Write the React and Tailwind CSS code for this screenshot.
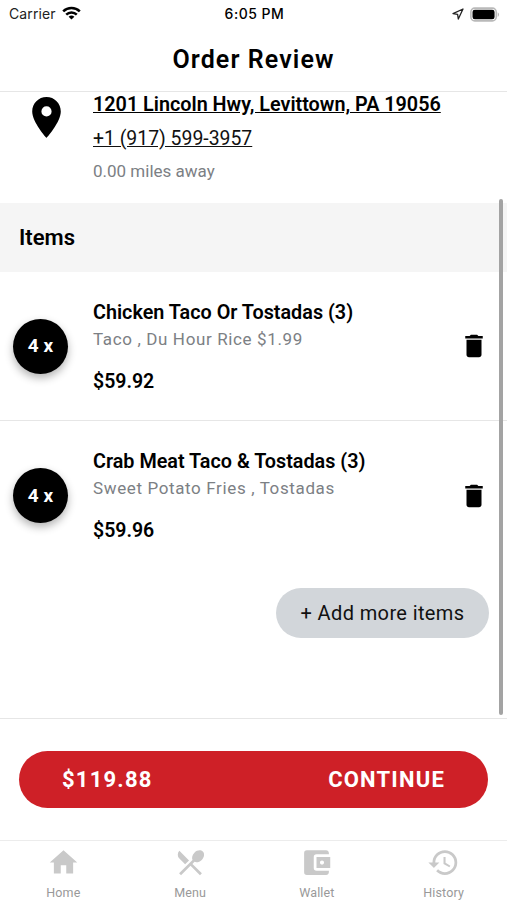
import React, { useState } from 'react';
import {
  MdPlace, MdDelete, MdHome, MdRestaurantMenu, MdAccountBalanceWallet, MdHistory
} from 'react-icons/md';

const initialItems = [
  {
    id: 1,
    qty: 4,
    name: 'Chicken Taco Or Tostadas (3)',
    extras: 'Taco , Du Hour Rice $1.99',
    price: 59.92,
  },
  {
    id: 2,
    qty: 4,
    name: 'Crab Meat Taco & Tostadas (3)',
    extras: 'Sweet Potato Fries , Tostadas',
    price: 59.96,
  },
];

const tabs = [
  { label: 'Home', icon: MdHome },
  { label: 'Menu', icon: MdRestaurantMenu },
  { label: 'Wallet', icon: MdAccountBalanceWallet },
  { label: 'History', icon: MdHistory },
];

const StatusBar = () => (
  <div className="h-7 shrink-0 grid grid-cols-3 items-center pl-[9px] pr-[7px] font-['Inter'] leading-7">
    <div className="flex items-center gap-1.5 text-[#222] text-[14px] tracking-[0.1px]">
      <span>Carrier</span>
      <svg className="w-[19px] h-[14px] -mt-0.5" viewBox="0 0 19 14" fill="none" stroke="#000" strokeWidth="2.5">
        <path d="M1.2 5.4a11.8 11.8 0 0 1 16.6 0" />
        <path d="M4.2 8.6a7.6 7.6 0 0 1 10.6 0" />
        <path d="M9.5 13.6 6.6 10.8a4.2 4.2 0 0 1 5.8 0z" fill="#000" stroke="none" />
      </svg>
    </div>
    <span className="text-center text-[14px] tracking-[0.5px] font-medium text-black">6:05 PM</span>
    <div className="flex items-center justify-end gap-1.5">
      <svg className="w-[12px] h-[12px]" viewBox="0 0 12 12" fill="none" stroke="#222" strokeWidth="1.3" strokeLinejoin="round">
        <path d="M11 1 1 5.6l4.6.7.7 4.7z" />
      </svg>
      <svg className="w-[30px] h-[15px]" viewBox="0 0 31 15">
        <rect x="0.9" y="0.9" width="26.2" height="13.2" rx="4" fill="#fff" stroke="#b9b9b9" strokeWidth="1.6" />
        <rect x="2.6" y="2.6" width="22.8" height="9.8" rx="2.4" fill="#000" />
        <path d="M28.6 5.2v4.8c1.9-.8 1.9-4 0-4.8z" fill="#b9b9b9" />
      </svg>
    </div>
  </div>
);

const OrderItem = ({ item, onDelete }) => (
  <div className="h-[149px] flex items-center pl-[13px] pr-[18px]">
    <div className="w-[55px] h-[55px] shrink-0 rounded-full bg-black text-white text-[19px] font-bold flex items-center justify-center pt-px shadow-[0_4px_8px_rgba(0,0,0,0.3)]">
      {item.qty} x
    </div>
    <div className="flex-1 ml-[25px]">
      <h3 className="text-[19.8px] leading-[26px] font-semibold text-black mt-[3px]">{item.name}</h3>
      <p className="text-[17px] leading-[26px] tracking-[0.63px] text-[#7c8084]">{item.extras}</p>
      <p className="text-[19.5px] leading-7 font-semibold text-black mt-4">${item.price.toFixed(2)}</p>
    </div>
    <button onClick={() => onDelete(item.id)} aria-label="Remove item">
      <MdDelete className="w-[30px] h-[30px] text-black" />
    </button>
  </div>
);

const App = () => {
  const [items, setItems] = useState(initialItems);
  const total = items.reduce((sum, item) => sum + item.price, 0);

  const handleDelete = (id) => {
    setItems(items.filter((item) => item.id !== id));
  };

  return (
    <div className="w-full h-screen bg-white flex flex-col overflow-hidden font-['Roboto',sans-serif]">
      <StatusBar />

      <header className="h-16 shrink-0 border-b border-[#e6e6e6] flex items-center justify-center">
        <h1 className="text-[25px] leading-8 font-semibold tracking-[1.1px] text-black">Order Review</h1>
      </header>

      <main className="relative h-[627px] shrink-0 border-b border-[#e6e6e6]">
        {/* Restaurant location */}
        <section className="h-[111px] flex pl-[22px]">
          <MdPlace className="w-[49px] h-[49px] mt-px shrink-0 text-black" />
          <div className="ml-[22px]">
            <p className="text-[19.8px] leading-6 mt-px font-semibold underline text-black">
              1201 Lincoln Hwy, Levittown, PA 19056
            </p>
            <p className="text-[19.4px] leading-6 mt-[10px] underline text-[#111]">+1 (917) 599-3957</p>
            <p className="text-[17px] leading-6 mt-2 text-[#7c8084]">0.00 miles away</p>
          </div>
        </section>

        <div className="h-[69px] bg-[#f5f5f5] flex items-center px-[19px]">
          <h2 className="text-[22px] font-semibold text-black">Items</h2>
        </div>

        <div className="divide-y divide-[#e6e6e6]">
          {items.map((item) => (
            <OrderItem key={item.id} item={item} onDelete={handleDelete} />
          ))}
        </div>

        <div className="flex justify-end pr-[18px] mt-[18px]">
          <button className="w-[213px] h-[50px] rounded-full bg-[#d2d6da] text-[20px] tracking-[0.38px] text-[#111]">
            + Add more items
          </button>
        </div>

        {/* Scroll indicator */}
        <div className="absolute right-1 top-[107px] w-1 h-[516px] rounded-full bg-[#a3a3a3]" />
      </main>

      <div className="h-[121px] shrink-0 px-[19px] flex items-center">
        <button className="w-full h-[57px] mb-px pt-px rounded-full bg-[#ce2027] text-white text-[22px] font-bold tracking-[1.2px] flex items-center justify-between pl-[43px] pr-[43px]">
          <span>${total.toFixed(2)}</span>
          <span>CONTINUE</span>
        </button>
      </div>

      <nav className="flex-1 border-t border-[#ececec] grid grid-cols-4">
        {tabs.map(({ label, icon: Icon }) => (
          <button key={label} className="flex flex-col items-center pt-[5px] text-[#999]">
            <Icon className="w-[33px] h-[33px] text-[#c9c9c9]" />
            <span className="text-[12.5px] leading-4 mt-[6px] tracking-[0.15px]">{label}</span>
          </button>
        ))}
      </nav>
    </div>
  );
};

export default App;
